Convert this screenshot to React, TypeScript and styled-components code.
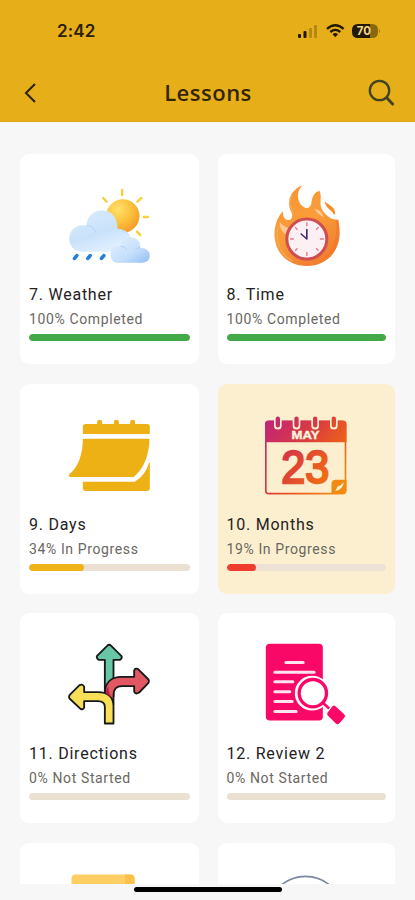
import React from "react";
import styled, { createGlobalStyle } from "styled-components";

const GlobalStyle = createGlobalStyle`
  * { box-sizing: border-box; }
  body { margin: 0; background: #f7f7f7; font-family: Roboto, sans-serif; }
`;

const Screen = styled.div`
  width: 415px;
  height: 900px;
  display: flex;
  flex-direction: column;
  overflow: hidden;
  background: #f7f7f7;
`;

const Header = styled.header`
  flex: 0 0 122px;
  background: #e6ae18;
  border-bottom: 1px solid #dda615;
`;

const StatusBar = styled.div`
  height: 64px;
  padding: 0 35px 2px 57px;
  display: flex;
  align-items: center;
  justify-content: space-between;
`;

const Clock = styled.span`
  font: 600 17px/20px Inter, sans-serif;
  letter-spacing: 0.1px;
  color: #2a2006;
`;

const StatusIcons = styled.svg`
  display: block;
  width: 84px;
  height: 18px;
`;

const NavBar = styled.nav`
  height: 57px;
  padding: 0 20px 0 23px;
  display: grid;
  grid-template-columns: 28px 1fr 28px;
  align-items: center;
`;

const Title = styled.h1`
  margin: 0;
  padding: 0 2px 2px 0;
  text-align: center;
  font: 600 22px/30px "Open Sans", sans-serif;
  letter-spacing: 0.5px;
  color: #332607;
`;

const IconButton = styled.button`
  width: 28px;
  height: 28px;
  padding: 0;
  border: 0;
  background: none;
  svg { display: block; }
`;

const Lessons = styled.main`
  flex: 0 0 762px;
  overflow: hidden;
  padding: 32px 20px 0;
  display: grid;
  grid-template-columns: 178.5px 177.5px;
  grid-auto-rows: 210px;
  gap: 19.6px 19px;
`;

const Card = styled.article<{ $active?: boolean }>`
  padding: 30px 9px 0;
  border-radius: 9px;
  background: ${(p) => (p.$active ? "#fcefcf" : "#fff")};
`;

const Picture = styled.svg`
  display: block;
  width: 84px;
  height: 84px;
  margin: 0 auto;
`;

const Name = styled.h2`
  margin: 17px 0 0;
  font: 450 16px/20px Roboto, sans-serif;
  letter-spacing: 0.76px;
  white-space: nowrap;
  color: #24221f;
`;

const Status = styled.p`
  margin: 5px 0 0;
  font: 400 14px/18px Roboto, sans-serif;
  letter-spacing: 0.62px;
  white-space: nowrap;
  color: #6a6762;
`;

const Track = styled.div<{ $color?: string }>`
  height: 7px;
  margin-top: 6px;
  border-radius: 4px;
  overflow: hidden;
  background: ${(p) => p.$color || "#eae1d2"};
`;

const Fill = styled.div<{ $color: string }>`
  height: 100%;
  border-radius: 4px;
  background: ${(p) => p.$color};
`;

const HomeArea = styled.footer`
  flex: 0 0 16px;
  display: flex;
  justify-content: center;
  padding-top: 3px;
`;

const HomeIndicator = styled.div`
  width: 148px;
  height: 5px;
  border-radius: 3px;
  background: #000;
`;

const Weather = () => (
  <Picture viewBox="157.5 102 252 252">
    <defs>
      <radialGradient id="sun" cx=".35" cy=".3" r=".75">
        <stop offset="0" stopColor="#ffe16a" /><stop offset=".55" stopColor="#fcc03b" /><stop offset="1" stopColor="#f49b28" />
      </radialGradient>
      <linearGradient id="cloud" x1=".2" y1="0" x2=".7" y2="1">
        <stop offset="0" stopColor="#d9ebfd" /><stop offset=".55" stopColor="#c9e2fb" /><stop offset="1" stopColor="#e3f1ff" />
      </linearGradient>
      <linearGradient id="smallCloud" x1="0" y1="0" x2="1" y2="1">
        <stop offset="0" stopColor="#e3f0fe" /><stop offset=".6" stopColor="#c4defa" /><stop offset="1" stopColor="#8fbef3" />
      </linearGradient>
    </defs>
    <g stroke="#fad03f" strokeWidth="7.5" strokeLinecap="round">
      <path d="M323 120V135M266 144L276 155M380 144L369 155M388 201H400M367 245L377 255" />
    </g>
    <circle cx="325" cy="198" r="50" fill="url(#sun)" />
    <path d="M203 305C180 305 164 287 164 266C164 239 189 221 216 227C217 199 237 181 264 181C292 181 311 207 309 236C333 236 350 252 350 272C350 292 336 305 315 305Z" fill="url(#cloud)" />
    <path d="M216 227C230 227 240 235 244 248" fill="none" stroke="#a6cbed" strokeWidth="3" opacity=".6" />
    <path d="M309 237C320 238 334 244 342 255" fill="none" stroke="#adcff0" strokeWidth="3" opacity=".5" />
    <path d="M309 338C296 338 288 328 288 314C288 298 302 286 318 289C321 271 333 262 349 262C367 262 379 278 377 293C394 293 406 303 406 316C406 329 398 338 383 338Z" fill="url(#smallCloud)" />
    <path d="M318 289C328 289 334 294 337 300M377 293C372 293 367 295 363 298" fill="none" stroke="#9dc6ed" strokeWidth="3" opacity=".6" />
    <path d="M180 325L187 317M220 325L227 317M261 325L268 317" stroke="#257fd9" strokeWidth="11" strokeLinecap="round" />
  </Picture>
);

const Time = () => (
  <Picture viewBox="163.5 102 252 252">
    <defs>
      <linearGradient id="flame" x1="0" y1="0" x2=".5" y2="1">
        <stop offset="0" stopColor="#f69332" /><stop offset=".55" stopColor="#fa9d38" /><stop offset="1" stopColor="#f28130" />
      </linearGradient>
    </defs>
    <path d="M279 106C267 111 240 125 239 159C238 178 248 184 248 197C248 213 229 215 223 201C220 194 220 190 221 184C206 197 195 225 195 252C195 309 236 348 292 348C350 348 390 307 390 249C390 232 388 217 386 209C374 210 360 206 349 193C338 181 333 174 333 160C333 145 336 136 330 122C315 126 308 139 306 157C304 177 291 176 281 170C262 158 259 125 279 106Z" fill="url(#flame)" />
    <path d="M346 154C348 178 370 181 373 194L377 192C378 170 358 167 346 154Z" fill="#f58c2b" />
    <path d="M248 134C232 157 247 176 252 192M206 228C196 270 211 315 249 332" fill="none" stroke="#fab06a" strokeWidth="4" opacity=".7" />
    <path d="M314 176C329 179 339 187 343 202C332 196 322 189 314 176ZM211 215C209 236 220 246 229 253C231 244 232 240 236 234C224 230 217 224 211 215Z" fill="#ffc899" />
    <path d="M379 210C385 262 374 304 333 333C372 318 390 286 390 249C390 232 388 217 386 209Z" fill="#f2762d" opacity=".65" />
    <circle cx="292" cy="267" r="60" fill="#fdf0f4" stroke="#cf4e52" strokeWidth="9" />
    <path d="M292 217V229M292 306V318M242 267H253M331 267H343M257 232L264 239M320 295L327 302M327 232L320 239M264 295L257 302" stroke="#df7c84" strokeWidth="4" />
    <path d="M292 239V267L275 252" fill="none" stroke="#41306d" strokeWidth="5" strokeLinecap="round" strokeLinejoin="round" />
  </Picture>
);

const Days = () => (
  <Picture viewBox="157.5 102 252 252">
    <g fill="#edb116">
      <path d="M213 132H248V125Q248 120 253 120H258Q263 120 263 125V132H298V125Q298 120 303 120H308Q313 120 313 125V132H347V125Q347 120 352 120H357Q362 120 362 125V132H398Q406 132 406 140V162H205V140Q205 132 213 132Z" />
      <path d="M205 176H405C404 221 391 263 358 291H169Q162 291 163 284C191 262 205 223 205 176Z" />
      <path d="M205 305H361C383 292 397 272 404 247L406 250V324Q406 333 397 333H214Q205 333 205 324Z" />
    </g>
  </Picture>
);

const Months = () => (
  <Picture viewBox="163.5 102 252 252">
    <defs>
      <linearGradient id="month" gradientUnits="userSpaceOnUse" x1="167" y1="138" x2="409" y2="325">
        <stop offset="0" stopColor="#c12676" /><stop offset=".4" stopColor="#db3c3e" /><stop offset=".72" stopColor="#ed6419" /><stop offset="1" stopColor="#f6930f" />
      </linearGradient>
    </defs>
    <rect x="169" y="124" width="239" height="217" rx="9" fill="none" stroke="url(#month)" strokeWidth="5" />
    <path d="M167 187V131Q167 122 176 122H401Q411 122 411 132V187Z" fill="url(#month)" />
    <g fill="none" strokeLinecap="round">
      <path d="M205 121V137M261 121V137M317 121V137M373 121V137" stroke="#fcefcf" strokeWidth="23" />
      <path d="M205 116V136M261 116V136M317 116V136M373 116V136" stroke="url(#month)" strokeWidth="13" />
    </g>
    <text x="288" y="178" textAnchor="middle" fontFamily="Liberation Sans" fontSize="31" fontWeight="700" textLength="84" lengthAdjust="spacingAndGlyphs" fill="#fff3df" stroke="#fff3df" strokeWidth="1">MAY</text>
    <text x="287" y="310" textAnchor="middle" fontFamily="Liberation Sans" fontSize="138" fontWeight="400" textLength="144" lengthAdjust="spacingAndGlyphs" fill="url(#month)" stroke="url(#month)" strokeWidth="7">23</text>
    <path d="M366 342V312Q366 299 379 299H411V331Q411 342 400 342Z" fill="#f28a12" />
    <path d="M377 334Q382 327 383 320Q390 320 403 307Q401 328 377 334Z" fill="#fff1d4" />
  </Picture>
);

const Directions = () => (
  <Picture viewBox="157.5 100.5 252 252">
    <g stroke="#16191a" strokeWidth="5.5" strokeLinejoin="round">
      <path d="M271 260V151H252Q246 147 247 140L278 109Q284 103 290 109L321 140Q324 147 316 151H297V260Z" fill="#67c7a5" />
      <path d="M271 285V253C271 219 290 202 321 202H359V184Q360 175 370 178L402 210Q405 215 402 220L374 249Q362 256 359 246V230H322C304 230 297 240 297 257V285Z" fill="#e15864" />
      <path d="M271 342V292C271 279 264 275 250 275H209V294Q206 302 198 298L165 267Q162 262 165 257L195 227Q205 222 209 232V248H250C282 248 297 266 297 292V342Z" fill="#f7df58" />
    </g>
    <path d="M274 250C275 243 277 236 282 231C281 246 287 256 291 266Q283 258 274 252Z" fill="#b51f44" />
  </Picture>
);

const Review = () => (
  <Picture viewBox="163.5 100.5 252 252">
    <rect x="169" y="103" width="171" height="230" rx="12" fill="#fa0868" />
    <path d="M229 159H281M196 188H314M196 217H250M196 247H241M196 276H248M196 306H260" stroke="#ffe3ef" strokeWidth="9" strokeLinecap="round" />
    <circle cx="308" cy="251" r="46" fill="#fff" stroke="#fff" strokeWidth="12" />
    <circle cx="310" cy="251" r="41" fill="#fff" stroke="#fa0868" strokeWidth="10" />
    <path d="M340 280L359 297" stroke="#fa0868" strokeWidth="8" />
    <path d="M369 290Q373 286 378 290L404 314Q409 319 405 324L389 342Q384 347 379 342L355 318Q350 313 355 308Z" fill="#fa0868" />
  </Picture>
);

const YellowBox = () => (
  <Picture viewBox="0 0 84 84">
    <rect x="4.5" y="1.5" width="63" height="70" rx="4" fill="#ffce65" />
    <path d="M58 1.5H63.5Q67.5 1.5 67.5 5.5V72H58Z" fill="#fcc14d" />
  </Picture>
);

const CircleOutline = () => (
  <Picture viewBox="0 0 84 84">
    <circle cx="41.5" cy="41" r="37.7" fill="none" stroke="#7c88a3" strokeWidth="1.7" />
  </Picture>
);

interface Lesson {
  name: string;
  status: string;
  progress: number;
  color: string;
  picture: React.ReactNode;
  active?: boolean;
}

const lessons: Lesson[] = [
  { name: "7. Weather", status: "100% Completed", progress: 100, color: "#43a947", picture: <Weather /> },
  { name: "8. Time", status: "100% Completed", progress: 100, color: "#43a947", picture: <Time /> },
  { name: "9. Days", status: "34% In Progress", progress: 34, color: "#edb317", picture: <Days /> },
  { name: "10. Months", status: "19% In Progress", progress: 18.5, color: "#ee3d2d", picture: <Months />, active: true },
  { name: "11. Directions", status: "0% Not Started", progress: 0, color: "#edb317", picture: <Directions /> },
  { name: "12. Review 2", status: "0% Not Started", progress: 0, color: "#edb317", picture: <Review /> },
];

export default function App() {
  return (
    <>
      <GlobalStyle />
      <Screen>
        <Header>
          <StatusBar>
            <Clock>2:42</Clock>
            <StatusIcons viewBox="0 0 84 18">
              <g fill="#211906">
                <rect x="2" y="12" width="3" height="4" rx="1" /><rect x="7.5" y="9" width="3" height="7" rx="1" />
                <g opacity=".25"><rect x="13" y="6" width="3" height="10" rx="1" /><rect x="18" y="3" width="3" height="13" rx="1" /></g>
                <path d="M56 8Q56 2 62 2H74V16H62Q56 16 56 10Z" />
                <path d="M74 2H76Q82 2 82 8V10Q82 16 76 16H74Z" opacity=".48" />
                <path d="M83 7Q85 9 83 11Z" opacity=".4" />
              </g>
              <g fill="none" stroke="#211906" strokeWidth="2.3">
                <path d="M31 6.8Q39.3 -.2 47.6 6.8M34.3 10Q39.3 5.8 44.3 10" />
              </g>
              <path d="M36.6 12.2Q39.3 10 42 12.2L39.3 15.2Z" fill="#211906" />
              <text x="68" y="13" textAnchor="middle" fontFamily="Inter" fontSize="11.5" fontWeight="700" fill="#f3d488">70</text>
            </StatusIcons>
          </StatusBar>
          <NavBar>
            <IconButton aria-label="Back">
              <svg width="28" height="28" viewBox="0 0 28 28" fill="none"><path d="M12 5L3 14L12 23" stroke="#302306" strokeWidth="2.1" /></svg>
            </IconButton>
            <Title>Lessons</Title>
            <IconButton aria-label="Search">
              <svg width="28" height="28" viewBox="0 0 28 28" fill="none" stroke="#404421"><circle cx="12.5" cy="11.5" r="9.7" strokeWidth="2.3" /><path d="M19.5 18.5L26.5 26" strokeWidth="2.8" /></svg>
            </IconButton>
          </NavBar>
        </Header>
        <Lessons>
          {lessons.map((lesson) => (
            <Card key={lesson.name} $active={lesson.active}>
              {lesson.picture}
              <Name>{lesson.name}</Name>
              <Status>{lesson.status}</Status>
              <Track $color={lesson.active ? "#ece2d5" : undefined}>
                <Fill $color={lesson.color} style={{ width: `${lesson.progress}%` }} />
              </Track>
            </Card>
          ))}
          <Card><YellowBox /></Card>
          <Card><CircleOutline /></Card>
        </Lessons>
        <HomeArea><HomeIndicator /></HomeArea>
      </Screen>
    </>
  );
}
